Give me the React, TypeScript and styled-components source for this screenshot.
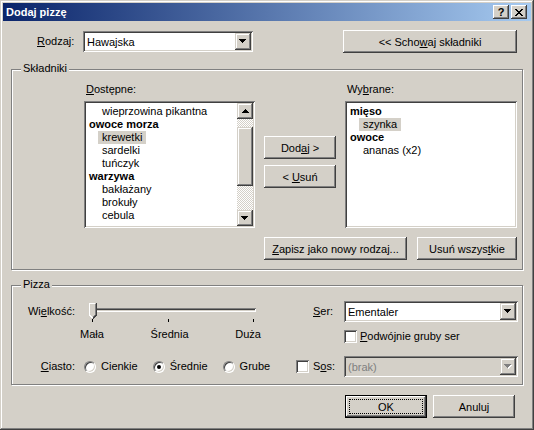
import React from 'react';
import styled, { createGlobalStyle, css } from 'styled-components';

const GlobalStyle = createGlobalStyle`
  html, body {
    margin: 0;
    padding: 0;
    background: #d4d0c8;
  }

  body {
    color: #000000;
    font-family: 'Liberation Sans', Arial, sans-serif;
    font-size: 11px;
  }

  * {
    box-sizing: border-box;
  }
`;

const raised = css`
  box-shadow: inset -1px -1px #404040, inset 1px 1px #ffffff, inset -2px -2px #808080, inset 2px 2px #d4d0c8;
`;

const raisedSmall = css`
  box-shadow: inset -1px -1px #404040, inset 1px 1px #d4d0c8, inset -2px -2px #808080, inset 2px 2px #ffffff;
`;

const sunken = css`
  box-shadow: inset 1px 1px #808080, inset -1px -1px #ffffff, inset 2px 2px #404040, inset -2px -2px #d4d0c8;
`;

const Window = styled('div')`
  background: #d4d0c8;
  box-shadow: inset -1px -1px #404040, inset 1px 1px #d4d0c8, inset -2px -2px #808080, inset 2px 2px #ffffff;
  display: flex;
  flex-direction: column;
  height: 430px;
  padding: 3px;
  width: 534px;
`;

const TitleBar = styled('div')`
  align-items: center;
  background: linear-gradient(to right, #0a246a, #a6caf0);
  color: #ffffff;
  display: flex;
  font-weight: bold;
  height: 18px;
  padding: 0 4px 0 3px;
`;

const Title = styled('span')`
  flex: 1;
`;

const CaptionButton = styled('span')<{ $gap?: boolean }>`
  align-items: center;
  background: #d4d0c8;
  ${ raised }
  color: #000000;
  display: flex;
  font-weight: bold;
  height: 14px;
  justify-content: center;
  margin-left: ${ (p) => (p.$gap ? 2 : 0) }px;
  width: 16px;
`;

const Client = styled('div')`
  display: flex;
  flex: 1;
  flex-direction: column;
  padding: 9px 8px 0 8px;
`;

const TopRow = styled('div')`
  align-items: center;
  display: flex;
  height: 23px;
  padding-left: 26px;
  padding-right: 6px;
`;

const RowLabel = styled('span')<{ $width: number; $right?: boolean; $after?: number }>`
  flex: none;
  line-height: 13px;
  margin-right: ${ (p) => p.$after ?? 0 }px;
  text-align: ${ (p) => (p.$right ? 'right' : 'left') };
  width: ${ (p) => p.$width }px;
`;

const Combo = styled('div')<{ $width: number; $disabled?: boolean }>`
  align-items: center;
  background: ${ (p) => (p.$disabled ? '#d4d0c8' : '#ffffff') };
  ${ sunken }
  color: ${ (p) => (p.$disabled ? '#808080' : '#000000') };
  display: flex;
  flex: none;
  height: 21px;
  padding: 2px;
  width: ${ (p) => p.$width }px;
`;

const ComboText = styled('span')`
  flex: 1;
  padding-left: 2px;
`;

const DropButton = styled('span')`
  align-items: center;
  background: #d4d0c8;
  ${ raisedSmall }
  display: flex;
  height: 17px;
  justify-content: center;
  width: 16px;
`;

const PushButton = styled('button')<{ $width: number; $default?: boolean }>`
  background: #d4d0c8;
  border: ${ (p) => (p.$default ? '1px solid #000000' : '0') };
  ${ raised }
  color: #000000;
  flex: none;
  font: inherit;
  height: 23px;
  padding: 0;
  position: relative;
  width: ${ (p) => p.$width }px;

  ${ (p) => p.$default && css`
    &::after {
      border: 1px dotted #000000;
      content: '';
      inset: 3px;
      position: absolute;
    }
  ` }
`;

const Spacer = styled('div')`
  flex: 1;
`;

const GroupBox = styled('div')<{ $height: number; $top: number }>`
  border: 1px solid #808080;
  box-shadow: inset 1px 1px #ffffff, 1px 1px #ffffff;
  flex: none;
  height: ${ (p) => p.$height }px;
  margin-top: ${ (p) => p.$top }px;
  position: relative;
`;

const GroupTitle = styled('span')`
  background: #d4d0c8;
  left: 9px;
  line-height: 13px;
  padding: 0 2px;
  position: absolute;
  top: -8px;
`;

const IngredientsBody = styled('div')`
  display: flex;
  flex-direction: column;
  padding: 13px 5px 0 72px;
`;

const Columns = styled('div')`
  display: flex;
  gap: 9px;
`;

const Column = styled('div')<{ $width: number; $pad?: number }>`
  display: flex;
  flex-direction: column;
  gap: 6px;
  padding-top: ${ (p) => p.$pad ?? 0 }px;
  width: ${ (p) => p.$width }px;
`;

const FieldLabel = styled('span')`
  line-height: 13px;
  margin-bottom: -1px;
  padding-left: 2px;
`;

const ListBox = styled('div')`
  background: #ffffff;
  ${ sunken }
  display: flex;
  height: 127px;
  overflow: hidden;
  padding: 2px;
`;

const ListItems = styled('div')`
  flex: 1;
  overflow: hidden;
  padding-top: 2px;
`;

const ListGroup = styled('div')`
  font-weight: bold;
  line-height: 13px;
  padding-left: 3px;
  white-space: nowrap;
`;

const ListItem = styled('div')<{ $selected?: boolean }>`
  background: ${ (p) => (p.$selected ? '#d4d0c8' : 'transparent') };
  line-height: 13px;
  margin-left: 12px;
  padding: 0 4px;
  white-space: nowrap;
  width: fit-content;
`;

const ScrollBar = styled('div')`
  display: flex;
  flex-direction: column;
  width: 16px;
`;

const ScrollArrow = styled('div')`
  align-items: center;
  background: #d4d0c8;
  ${ raisedSmall }
  display: flex;
  height: 16px;
  justify-content: center;
`;

const ScrollTrack = styled('div')`
  background-color: #d4d0c8;
  background-image: conic-gradient(#ffffff 25%, transparent 0 50%, #ffffff 0 75%, transparent 0);
  background-size: 2px 2px;
  flex: 1;
`;

const ScrollThumb = styled('div')<{ $offset: number; $size: number }>`
  background: #d4d0c8;
  ${ raisedSmall }
  height: ${ (p) => p.$size }px;
  margin-top: ${ (p) => p.$offset }px;
`;

const BottomButtons = styled('div')<{ $top: number; $gap: number; $right: number }>`
  display: flex;
  gap: ${ (p) => p.$gap }px;
  justify-content: flex-end;
  margin-top: ${ (p) => p.$top }px;
  padding-right: ${ (p) => p.$right }px;
`;

const PizzaBody = styled('div')`
  display: flex;
  padding-top: 15px;
`;

const LeftPane = styled('div')`
  display: flex;
  flex-direction: column;
  width: 284px;
`;

const RightPane = styled('div')`
  display: flex;
  flex: 1;
  flex-direction: column;
`;

const ControlRow = styled('div')<{ $top?: number; $indent?: number }>`
  align-items: center;
  display: flex;
  height: 21px;
  margin-top: ${ (p) => p.$top ?? 0 }px;
  padding-left: ${ (p) => p.$indent ?? 0 }px;
`;

const Slider = styled('div')`
  height: 21px;
  padding-top: 7px;
  position: relative;
  width: 166px;
`;

const SliderChannel = styled('div')`
  background: #d4d0c8;
  ${ sunken }
  height: 4px;
`;

const SliderThumb = styled('svg')`
  left: -1px;
  position: absolute;
  top: 2px;
`;

const Tick = styled('span')`
  background: #000000;
  height: 3px;
  position: absolute;
  top: 18px;
  width: 1px;
`;

const TickLabels = styled('div')`
  display: flex;
  justify-content: space-between;
  line-height: 13px;
  margin-left: 68px;
  margin-top: 6px;
  width: 181px;
`;

const RadioOption = styled('label')`
  align-items: center;
  display: flex;
  gap: 5px;
  line-height: 13px;
  margin-right: 15px;
`;

const RadioCircle = styled('span')<{ $checked?: boolean }>`
  align-items: center;
  background: #ffffff;
  border: 1px solid;
  border-color: #808080 #ffffff #ffffff #808080;
  border-radius: 50%;
  box-shadow: inset 1px 1px #404040, inset -1px -1px #d4d0c8;
  display: flex;
  height: 12px;
  justify-content: center;
  width: 12px;

  &::after {
    background: ${ (p) => (p.$checked ? '#000000' : 'transparent') };
    border-radius: 50%;
    content: '';
    height: 4px;
    width: 4px;
  }
`;

const CheckRow = styled('label')`
  align-items: center;
  display: flex;
  gap: 3px;
  line-height: 13px;
  margin-top: 8px;
  padding-left: 48px;
`;

const CheckBox = styled('span')<{ $gap?: number }>`
  background: #ffffff;
  ${ sunken }
  flex: none;
  height: 13px;
  margin-right: ${ (p) => p.$gap ?? 0 }px;
  width: 13px;
`;

const DownArrow = ({ disabled }: { disabled?: boolean }) => (
  <svg width='8' height='5' viewBox='0 0 8 5' shapeRendering='crispEdges'>
    { disabled && <path d='M1,1 H8 V2 H7 V3 H6 V4 H5 V5 H4 V4 H3 V3 H2 V2 H1 Z' fill='#ffffff' /> }
    <path
      d='M0,0 H7 V1 H6 V2 H5 V3 H4 V4 H3 V3 H2 V2 H1 V1 H0 Z'
      fill={ disabled ? '#808080' : '#000000' }
    />
  </svg>
);

const UpArrow = () => (
  <svg width='7' height='4' viewBox='0 0 7 4' shapeRendering='crispEdges'>
    <path d='M3,0 H4 V1 H5 V2 H6 V3 H7 V4 H0 V3 H1 V2 H2 V1 H3 Z' fill='#000000' />
  </svg>
);

const CloseGlyph = () => (
  <svg width='8' height='7' viewBox='0 0 8 7' shapeRendering='crispEdges'>
    <path
      d='M0,0h2v1h-2z M6,0h2v1h-2z M1,1h2v1h-2z M5,1h2v1h-2z M2,2h4v1h-4z M3,3h2v1h-2z M2,4h4v1h-4z M1,5h2v1h-2z M5,5h2v1h-2z M0,6h2v1h-2z M6,6h2v1h-2z'
      fill='#000000'
    />
  </svg>
);

type Entry = { label: string; group?: boolean; selected?: boolean };

const available: Entry[] = [
  { label: 'wieprzowina pikantna' },
  { label: 'owoce morza', group: true },
  { label: 'krewetki', selected: true },
  { label: 'sardelki' },
  { label: 'tuńczyk' },
  { label: 'warzywa', group: true },
  { label: 'bakłażany' },
  { label: 'brokuły' },
  { label: 'cebula' },
];

const chosen: Entry[] = [
  { label: 'mięso', group: true },
  { label: 'szynka', selected: true },
  { label: 'owoce', group: true },
  { label: 'ananas (x2)' },
];

const renderEntries = (entries: Entry[]) => entries.map((entry) => (
  entry.group
    ? <ListGroup key={ entry.label }>{ entry.label }</ListGroup>
    : <ListItem key={ entry.label } $selected={ entry.selected }>{ entry.label }</ListItem>
));

const sizes = ['Mała', 'Średnia', 'Duża'];
const ticks = [2, 78, 163];
const crusts = [
  { label: 'Cienkie', checked: false },
  { label: 'Średnie', checked: true },
  { label: 'Grube', checked: false },
];

const App: React.FC = () => {
  return (
    <>
      <GlobalStyle />
      <Window>
        <TitleBar>
          <Title>Dodaj pizzę</Title>
          <CaptionButton>?</CaptionButton>
          <CaptionButton $gap><CloseGlyph /></CaptionButton>
        </TitleBar>

        <Client>
          <TopRow>
            <RowLabel $width={ 46 }><u>R</u>odzaj:</RowLabel>
            <Combo $width={ 170 }>
              <ComboText>Hawajska</ComboText>
              <DropButton><DownArrow /></DropButton>
            </Combo>
            <Spacer />
            <PushButton $width={ 174 }>&lt;&lt; Scho<u>w</u>aj składniki</PushButton>
          </TopRow>

          <GroupBox $height={ 201 } $top={ 16 }>
            <GroupTitle>Składniki</GroupTitle>
            <IngredientsBody>
              <Columns>
                <Column $width={ 171 }>
                  <FieldLabel><u>D</u>ostępne:</FieldLabel>
                  <ListBox>
                    <ListItems>{ renderEntries(available) }</ListItems>
                    <ScrollBar>
                      <ScrollArrow><UpArrow /></ScrollArrow>
                      <ScrollTrack>
                        <ScrollThumb $offset={ 8 } $size={ 59 } />
                      </ScrollTrack>
                      <ScrollArrow><DownArrow /></ScrollArrow>
                    </ScrollBar>
                  </ListBox>
                </Column>
                <Column $width={ 72 } $pad={ 53 }>
                  <PushButton $width={ 72 }>Dod<u>a</u>j &gt;</PushButton>
                  <PushButton $width={ 72 }>&lt; <u>U</u>suń</PushButton>
                </Column>
                <Column $width={ 172 }>
                  <FieldLabel>Wy<u>b</u>rane:</FieldLabel>
                  <ListBox>
                    <ListItems>{ renderEntries(chosen) }</ListItems>
                  </ListBox>
                </Column>
              </Columns>
              <BottomButtons $top={ 9 } $gap={ 10 } $right={ 0 }>
                <PushButton $width={ 143 }><u>Z</u>apisz jako nowy rodzaj...</PushButton>
                <PushButton $width={ 100 }>Usuń wszys<u>t</u>kie</PushButton>
              </BottomButtons>
            </IngredientsBody>
          </GroupBox>

          <GroupBox $height={ 100 } $top={ 15 }>
            <GroupTitle>Pizza</GroupTitle>
            <PizzaBody>
              <LeftPane>
                <ControlRow>
                  <RowLabel $width={ 63 } $right $after={ 15 }>Wi<u>e</u>lkość:</RowLabel>
                  <Slider>
                    <SliderChannel />
                    <SliderThumb width='8' height='16' viewBox='0 0 8 16' shapeRendering='crispEdges'>
                      <path d='M0,0 H7 V12 L4,15 H3 L0,12 Z' fill='#d4d0c8' />
                      <path d='M0.5,12 V0.5 H6' stroke='#ffffff' fill='none' />
                      <path d='M0.5,12 L3.5,15' stroke='#ffffff' fill='none' />
                      <path d='M7.5,0 V12 L4,15.5' stroke='#404040' fill='none' />
                      <path d='M6.5,1 V11.5 L4,14' stroke='#808080' fill='none' />
                    </SliderThumb>
                    { ticks.map((left) => <Tick key={ left } style={ { left } } />) }
                  </Slider>
                </ControlRow>
                <TickLabels>
                  { sizes.map((size) => <span key={ size }>{ size }</span>) }
                </TickLabels>
                <ControlRow $top={ 15 }>
                  <RowLabel $width={ 63 } $right $after={ 9 }><u>C</u>iasto:</RowLabel>
                  { crusts.map((crust) => (
                    <RadioOption key={ crust.label }>
                      <RadioCircle $checked={ crust.checked } />
                      { crust.label }
                    </RadioOption>
                  )) }
                </ControlRow>
              </LeftPane>

              <RightPane>
                <ControlRow $indent={ 17 }>
                  <RowLabel $width={ 31 }><u>S</u>er:</RowLabel>
                  <Combo $width={ 174 }>
                    <ComboText>Ementaler</ComboText>
                    <DropButton><DownArrow /></DropButton>
                  </Combo>
                </ControlRow>
                <CheckRow>
                  <CheckBox />
                  <span><u>P</u>odwójnie gruby ser</span>
                </CheckRow>
                <ControlRow $top={ 13 }>
                  <CheckBox $gap={ 4 } />
                  <RowLabel $width={ 31 }>S<u>o</u>s:</RowLabel>
                  <Combo $width={ 174 } $disabled>
                    <ComboText>(brak)</ComboText>
                    <DropButton><DownArrow disabled /></DropButton>
                  </Combo>
                </ControlRow>
              </RightPane>
            </PizzaBody>
          </GroupBox>

          <BottomButtons $top={ 10 } $gap={ 6 } $right={ 8 }>
            <PushButton $width={ 82 } $default>OK</PushButton>
            <PushButton $width={ 82 }>Anuluj</PushButton>
          </BottomButtons>
        </Client>
      </Window>
    </>
  );
};

export default App;
